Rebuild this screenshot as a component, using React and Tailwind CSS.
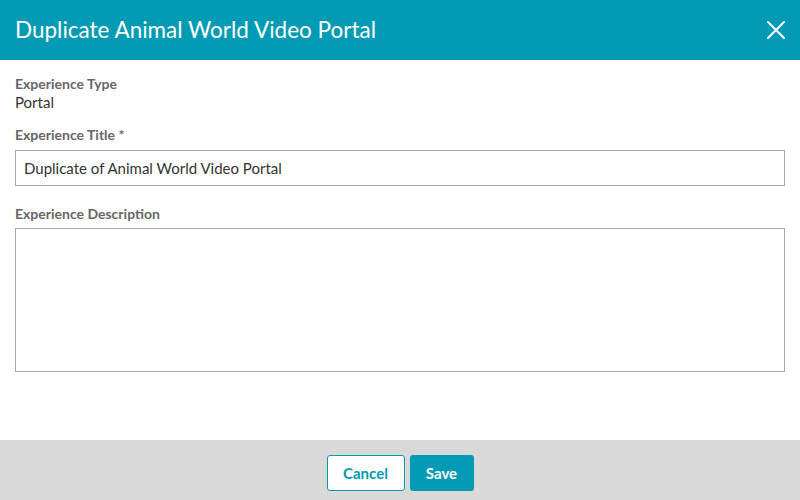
import { X } from "lucide-react";

export default function App() {
  return (
    <div className="w-[800px] h-[500px] flex flex-col bg-white font-['Lato',sans-serif]">
      <div className="h-[60px] bg-[#039ab3] flex items-center justify-between pl-[15px] pr-[8px]">
        <h1 className="text-white text-[22.5px] leading-none">Duplicate Animal World Video Portal</h1>
        <X size={32} strokeWidth={1.5} className="text-white" />
      </div>
      <div className="flex-1 px-[15px] pt-[15px]">
        <div className="text-[14px] font-bold text-[#666] leading-[17px]">Experience Type</div>
        <div className="text-[15px] text-[#333] leading-[18px] mt-[1px]">Portal</div>
        <div className="text-[14px] font-bold text-[#666] leading-[17px] mt-[15px]">Experience Title *</div>
        <input
          defaultValue="Duplicate of Animal World Video Portal"
          className="mt-[7px] w-full h-[36px] border border-[#aaa] px-[8px] text-[15px] text-[#333] outline-none block"
        />
        <div className="text-[14px] font-bold text-[#666] leading-[17px] mt-[19px]">Experience Description</div>
        <textarea className="mt-[6px] w-full h-[144px] border border-[#aaa] block resize-none outline-none" />
      </div>
      <div className="h-[60px] bg-[#d9d9d9] flex items-start justify-center gap-[5px] pt-[15px]">
        <button className="h-[36px] w-[78px] bg-white border border-[#039ab3] rounded-[3px] text-[#039ab3] font-bold text-[15px]">Cancel</button>
        <button className="h-[36px] w-[64px] bg-[#039ab3] rounded-[3px] text-white font-bold text-[15px]">Save</button>
      </div>
    </div>
  );
}
